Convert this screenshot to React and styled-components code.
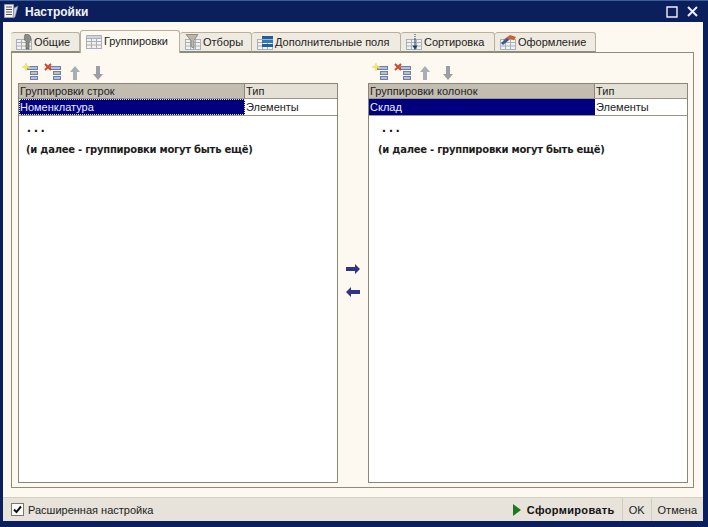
import * as React from "react"
import styled, { createGlobalStyle } from 'styled-components'

const GlobalStyle = createGlobalStyle`
  html, body {
    margin: 0;
    padding: 0;
    background: #0b2160;
    overflow: hidden;
  }
  * { box-sizing: border-box; }
`

const Frame = styled.div`
  width: 708px;
  height: 527px;
  display: flex;
  flex-direction: column;
  padding: 0 5px 6px 3px;
  background: #0a1f5c;
  border-top: 1px solid #3a5f9c;
  font-family: "Liberation Sans", Arial, sans-serif;
  font-size: 11px;
  color: #222;
`

const TitleBar = styled.div`
  height: 21px;
  flex: none;
  display: flex;
  align-items: center;
  background: #0a1f5c;
  color: #f2f4fa;
  margin-left: -3px;
  margin-right: -5px;
  padding: 0 10px 0 3px;
`

const TitleText = styled.span`
  font-weight: bold;
  font-size: 12px;
  margin-left: 6px;
`

const TitleButtons = styled.div`
  margin-left: auto;
  display: flex;
  align-items: center;
  gap: 9px;
`

const Client = styled.div`
  flex: 1;
  min-height: 0;
  display: flex;
  flex-direction: column;
  background: #fdf9f0;
`

const Main = styled.div`
  flex: 1;
  min-height: 0;
  display: flex;
  flex-direction: column;
  padding: 9px 9px 9px 8px;
`

const TabRow = styled.div`
  height: 21px;
  flex: none;
  display: flex;
  align-items: flex-end;
  position: relative;
  z-index: 1;
`

const Tab = styled.div`
  width: ${p => p.$w}px;
  height: ${p => (p.$active ? 23 : 20)}px;
  margin-bottom: ${p => (p.$active ? -1 : 0)}px;
  display: flex;
  align-items: center;
  gap: 1px;
  padding-left: 5px;
  padding-bottom: ${p => (p.$active ? 2 : 0)}px;
  background: ${p => (p.$active ? '#fdf9f0' : '#efebe0')};
  border: 1px solid #b4b0a2;
  border-bottom: ${p => (p.$active ? 'none' : '1px solid #8f8b7c')};
  border-left-width: ${p => (p.$active ? 1 : 0)}px;
  border-radius: 3px 3px 0 0;
  white-space: nowrap;
`

const Page = styled.div`
  flex: 1;
  min-height: 0;
  display: flex;
  border: 1px solid #8f8b7c;
  padding: 7px 5px 4px 6px;
`

const Column = styled.div`
  width: 320px;
  flex: none;
  display: flex;
  flex-direction: column;
`

const Toolbar = styled.div`
  height: 23px;
  flex: none;
  display: flex;
  align-items: flex-start;
  padding-left: 3px;
`

const ToolButton = styled.div`
  width: ${p => p.$w || 23}px;
  height: 21px;
  display: flex;
  align-items: flex-end;
`

const Grid = styled.div`
  flex: 1;
  min-height: 0;
  display: flex;
  flex-direction: column;
  background: #fff;
  border: 1px solid #8a8678;
`

const GridRow = styled.div`
  display: grid;
  grid-template-columns: 226px 1fr;
  height: ${p => (p.$head ? 15 : 17)}px;
  flex: none;
  border-bottom: 1px solid #9a968a;
`

const HeadCell = styled.div`
  background: ${p => (p.$sorted ? '#c2bdb0' : '#e5e1d6')};
  border-right: ${p => (p.$sorted ? '1px solid #8a8678' : 'none')};
  padding-left: 1px;
  line-height: 14px;
`

const Cell = styled.div`
  padding-left: 1px;
  line-height: 16px;
  background: ${p => (p.$selected ? '#00007f' : '#fff')};
  color: ${p => (p.$selected ? '#eef' : '#222')};
  outline: ${p => (p.$dotted ? '1px dotted #e8e8c0' : 'none')};
  outline-offset: -1px;
`

const Notes = styled.div`
  padding: 4px 0 0 ${p => p.$left}px;
`

const Dots = styled.div`
  padding-left: ${p => p.$indent}px;
  height: 23px;
  line-height: 14px;
  font-size: 14px;
  font-weight: bold;
  letter-spacing: 3px;
  color: #111;
`

const Note = styled.div`
  font-family: "DejaVu Sans", sans-serif;
  font-weight: bold;
  font-size: 10px;
  letter-spacing: -0.25px;
  line-height: 14px;
  color: #1c1c1c;
`

const MoveColumn = styled.div`
  width: 30px;
  flex: none;
  display: flex;
  flex-direction: column;
  align-items: center;
  justify-content: center;
  gap: 13px;
  padding-top: 18px;
`

const Footer = styled.div`
  height: 24px;
  flex: none;
  display: flex;
  align-items: center;
  background: #e7e3da;
  border-top: 1px solid #d4d0c4;
  padding-left: 8px;
`

const CheckBox = styled.span`
  width: 13px;
  height: 13px;
  display: inline-flex;
  align-items: center;
  justify-content: center;
  background: #fff;
  border: 1px solid #7c7868;
  margin-right: 4px;
`

const FooterActions = styled.div`
  margin-left: auto;
  display: flex;
  align-items: center;
  height: 100%;
`

const FooterButton = styled.div`
  height: 100%;
  display: flex;
  align-items: center;
  gap: 6px;
  padding: 0 ${p => p.$pr || 6}px 0 6px;
  font-weight: ${p => (p.$bold ? 'bold' : 'normal')};
  letter-spacing: ${p => (p.$bold ? '0.33px' : '0')};
  border-left: ${p => (p.$sep ? '1px solid #d0ccc0' : 'none')};
  color: ${p => (p.$bold ? '#111' : '#222')};
`

const MiniTable = () => (
  <g>
    <rect x="0.5" y="5.5" width="15" height="10" fill="#f4f1e6" stroke="#a7b0c0" />
    <path d="M0 8.500h16M5.500 6v10M10.500 6v10M0 12h16" stroke="#a7b0c0" fill="none" />
  </g>
)

const TabIcon = ({ kind }) => (
  <svg width="17" height="17" viewBox="0 0 17 17" style={{ flex: 'none' }}>
    <MiniTable />
    {kind === 'general' && (
      <path d="M9 0.500c3-1 6 1 6 4 0 2-1 3-2 3.500V15h-3V7.500C8 6.500 8 3 9 .5z" fill="#8c8c84" stroke="#55554e" strokeWidth="0.6" />
    )}
    {kind === 'group' && (
      <path d="M0.500 2.500h15v3h-15z" fill="#cfd3da" stroke="#a7b0c0" />
    )}
    {kind === 'filter' && (
      <path d="M1 0.500h12L9 6.500v8L6 12.500v-6z" fill="#b9b7a8" stroke="#77766b" strokeWidth="0.7" />
    )}
    {kind === 'fields' && (
      <g>
        <path d="M5 2h11v3H5z" fill="#1f5f9e" />
        <path d="M5 6h11v3H5z" fill="#2c7cb8" />
        <path d="M5 10h11v3H5z" fill="#1f5f9e" />
      </g>
    )}
    {kind === 'sort' && (
      <g>
        <path d="M9 0v5" stroke="#1e3f6e" strokeDasharray="1 1" />
        <path d="M9 5v8" stroke="#1e3f6e" />
        <path d="M6.500 11.500L9 16l2.500-4.500z" fill="#1e3f6e" />
      </g>
    )}
    {kind === 'design' && (
      <g>
        <path d="M3 6l7-5 6 2-2 3-4-1-4 3z" fill="#c9623a" />
        <path d="M1 9l6-5 2 2-6 5z" fill="#2f5d9c" />
      </g>
    )}
  </svg>
)

const Lines = () => (
  <g fill="#b4bfdc" stroke="#6f7fa8" strokeWidth="1">
    <rect x="6.500" y="3.500" width="10" height="3" />
    <rect x="9.500" y="8.500" width="7" height="3" />
    <rect x="9.500" y="13.500" width="7" height="3" />
  </g>
)

const AddIcon = () => (
  <svg width="18" height="18" viewBox="0 0 18 18">
    <Lines />
    <path d="M5 0l1 3 3 1-3 1-1 3-1-3-3-1 3-1z" fill="#f6e94a" stroke="#e8d878" strokeWidth="0.6" />
  </svg>
)

const RemoveIcon = () => (
  <svg width="18" height="18" viewBox="0 0 18 18">
    <Lines />
    <path d="M1 1l6 6M7 1L1 7" stroke="#d4401f" strokeWidth="1.8" />
  </svg>
)

const UpIcon = () => (
  <svg width="12" height="16" viewBox="0 0 12 16">
    <path d="M6 1l5 6H8v8H4V7H1z" fill="#a9adb4" />
  </svg>
)

const DownIcon = () => (
  <svg width="12" height="16" viewBox="0 0 12 16">
    <path d="M4 1h4v8h3l-5 6-5-6h3z" fill="#9a9ea6" />
  </svg>
)

const MoveIcon = ({ left }) => (
  <svg width="14" height="10" viewBox="0 0 14 10">
    <path d={left ? 'M0 5l5-5v3h9v4H5v3z' : 'M14 5L9 0v3H0v4h9v3z'} fill="#2e3486" />
  </svg>
)

const WindowIcon = () => (
  <svg width="16" height="17" viewBox="0 0 16 17">
    <path d="M1.500 1.500h9v13h-9z" fill="#f3f3f3" stroke="#9a9aa8" />
    <path d="M3 4h6M3 6.500h6M3 9h6M3 11.500h6" stroke="#555" />
    <path d="M11 5l4-2-3 11-2 1z" fill="#cfd4e4" stroke="#77798c" strokeWidth="0.6" />
  </svg>
)

const tabs = [
  { label: 'Общие', w: 69, icon: 'general' },
  { label: 'Группировки', w: 100, icon: 'group', active: true },
  { label: 'Отборы', w: 72, icon: 'filter' },
  { label: 'Дополнительные поля', w: 149, icon: 'fields' },
  { label: 'Сортировка', w: 94, icon: 'sort' },
  { label: 'Оформление', w: 101, icon: 'design' },
]

const GroupTable = ({ title, value, dotted, notesLeft, dotsIndent }) => (
  <Column>
    <Toolbar>
      <ToolButton><AddIcon /></ToolButton>
      <ToolButton $w={25}><RemoveIcon /></ToolButton>
      <ToolButton><UpIcon /></ToolButton>
      <ToolButton><DownIcon /></ToolButton>
    </Toolbar>
    <Grid>
      <GridRow $head>
        <HeadCell $sorted>{title}</HeadCell>
        <HeadCell>Тип</HeadCell>
      </GridRow>
      <GridRow>
        <Cell $selected $dotted={dotted}>{value}</Cell>
        <Cell>Элементы</Cell>
      </GridRow>
      <Notes $left={notesLeft}>
        <Dots $indent={dotsIndent}>...</Dots>
        <Note>(и далее - группировки могут быть ещё)</Note>
      </Notes>
    </Grid>
  </Column>
)

const App = () => (
  <>
    <GlobalStyle />
    <Frame>
      <TitleBar>
        <WindowIcon />
        <TitleText>Настройки</TitleText>
        <TitleButtons>
          <svg width="12" height="12" viewBox="0 0 12 12">
            <path d="M1 1h10v10H1z" fill="none" stroke="#eef" strokeWidth="1.4" />
          </svg>
          <svg width="11" height="11" viewBox="0 0 11 11">
            <path d="M1 1l9 9M10 1l-9 9" stroke="#eef" strokeWidth="2" />
          </svg>
        </TitleButtons>
      </TitleBar>
      <Client>
        <Main>
          <TabRow>
            {tabs.map(t => (
              <Tab key={t.label} $w={t.w} $active={t.active}>
                <TabIcon kind={t.icon} />
                {t.label}
              </Tab>
            ))}
          </TabRow>
          <Page>
            <GroupTable title="Группировки строк" value="Номенклатура" dotted notesLeft={7} dotsIndent={1} />
            <MoveColumn>
              <MoveIcon />
              <MoveIcon left />
            </MoveColumn>
            <GroupTable title="Группировки колонок" value="Склад" notesLeft={9} dotsIndent={4} />
          </Page>
        </Main>
        <Footer>
          <CheckBox>
            <svg width="9" height="9" viewBox="0 0 9 9">
              <path d="M1 4.500l2.500 2.500L8 1.500" fill="none" stroke="#111" strokeWidth="2" />
            </svg>
          </CheckBox>
          Расширенная настройка
          <FooterActions>
            <FooterButton $bold $pr={7}>
              <svg width="8" height="12" viewBox="0 0 8 12">
                <path d="M0 0l8 6-8 6z" fill="#1f7a1f" />
              </svg>
              Сформировать
            </FooterButton>
            <FooterButton $sep>OK</FooterButton>
            <FooterButton $sep>Отмена</FooterButton>
          </FooterActions>
        </Footer>
      </Client>
    </Frame>
  </>
)

export default App
